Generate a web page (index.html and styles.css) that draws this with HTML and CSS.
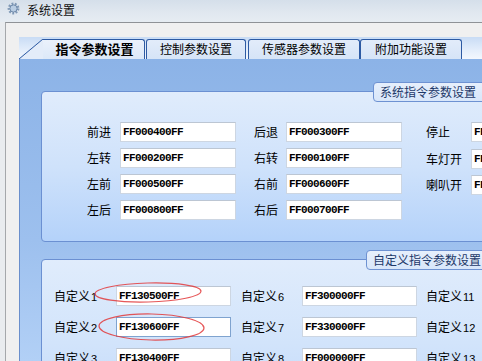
FILE: index.html
```html
<!DOCTYPE html>
<html>
<head>
  <meta charset="utf-8">
  <title>系统设置</title>
  <link rel="stylesheet" href="styles.css">
</head>
<body>
  <div id=window>
    <div class=titlebar>
      <svg class=app-icon width=16 height=16 viewBox="0 0 16 16">
        <circle cx=6.5 cy=6.5 r=4.6 fill=none stroke="#7f98b6" stroke-width=2.6 stroke-dasharray="1.8 1.4"/>
        <circle cx=6.5 cy=6.5 r=3.6 fill="#b9cde3" stroke="#6f8aab" stroke-width=1/>
        <circle cx=6.5 cy=6.5 r=1.5 fill="#eef4fa"/>
        <circle cx=12.5 cy=12.5 r=2.3 fill="#a9b6c4" stroke="#7b8896" stroke-width=1 stroke-dasharray="1.2 0.8"/>
      </svg>
      <span class=title>系统设置</span>
    </div>
    <div class=client>
      <div class=tabs>
        <div class="tab active">指令参数设置</div>
        <div class="tab t2">控制参数设置</div>
        <div class="tab t3">传感器参数设置</div>
        <div class="tab t4">附加功能设置</div>
      </div>
      <div class=panel>
        <div class="group g1">
          <div class=legend>系统指令参数设置</div>
          <div class=cols>
            <div class="col c1">
              <div class=row><span class=lbl>前进</span><span class=field>FF000400FF</span></div>
              <div class=row><span class=lbl>左转</span><span class=field>FF000200FF</span></div>
              <div class=row><span class=lbl>左前</span><span class=field>FF000500FF</span></div>
              <div class=row><span class=lbl>左后</span><span class=field>FF000800FF</span></div>
            </div>
            <div class="col c2">
              <div class=row><span class=lbl>后退</span><span class=field>FF000300FF</span></div>
              <div class=row><span class=lbl>右转</span><span class=field>FF000100FF</span></div>
              <div class=row><span class=lbl>右前</span><span class=field>FF000600FF</span></div>
              <div class=row><span class=lbl>右后</span><span class=field>FF000700FF</span></div>
            </div>
            <div class="col c3">
              <div class=row><span class=lbl>停止</span><span class=field>FF000000FF</span></div>
              <div class=row><span class=lbl>车灯开</span><span class=field>FF000900FF</span></div>
              <div class=row><span class=lbl>喇叭开</span><span class=field>FF000A00FF</span></div>
            </div>
          </div>
        </div>
        <div class="group g2">
          <div class=legend>自定义指令参数设置</div>
          <div class=cols>
            <div class="col c1">
              <div class=row><span class=lbl>自定义<i>1</i></span><span class=field>FF130500FF</span></div>
              <div class=row><span class=lbl>自定义<i>2</i></span><span class="field focus">FF130600FF</span></div>
              <div class=row><span class=lbl>自定义<i>3</i></span><span class=field>FF130400FF</span></div>
            </div>
            <div class="col c2">
              <div class=row><span class=lbl>自定义<i>6</i></span><span class=field>FF300000FF</span></div>
              <div class=row><span class=lbl>自定义<i>7</i></span><span class=field>FF330000FF</span></div>
              <div class=row><span class=lbl>自定义<i>8</i></span><span class=field>FF000000FF</span></div>
            </div>
            <div class="col c3">
              <div class=row><span class=lbl>自定义<i>11</i></span><span class=field>FF000000FF</span></div>
              <div class=row><span class=lbl>自定义<i>12</i></span><span class=field>FF000000FF</span></div>
              <div class=row><span class=lbl>自定义<i>13</i></span><span class=field>FF000000FF</span></div>
            </div>
          </div>
        </div>
      </div>
    </div>
    <!-- hand-drawn marks over the screenshot -->
    <svg class=marks width=482 height=361>
      <ellipse cx=148 cy=292.5 rx=53 ry=9.5 transform="rotate(-1.5 148 292.5)"/>
      <ellipse cx=151.5 cy=327 rx=52.5 ry=13 transform="rotate(1 151.5 327)"/>
    </svg>
  </div>
</body>
</html>
```

FILE: styles.css
```css
html, body {
  margin: 0;
  height: 100%;
  overflow: hidden;
}
body {
  font: 12px "Noto Sans CJK SC", "Noto Sans", sans-serif;
  color: #000;
  background: #f0f0f0;
}
#window {
  position: relative;
  width: 482px;
  height: 361px;
  display: flex;
  flex-direction: column;
  background: #e9ecef;
}
.titlebar {
  height: 22px;
  flex: none;
  display: flex;
  align-items: center;
  background: linear-gradient(#d5dfea, #e1e8f0 60%, #e6ecf2);
}
.app-icon {
  margin: -2px 4px 0 7px;
}
.title {
  line-height: 14px;
  margin-top: -2px;
  color: #111;
}
.client {
  flex: 1;
  display: flex;
  flex-direction: column;
  margin-left: 5px;
  border-top: 1px solid #8f9296;
  border-left: 1px solid #a5a8ab;
  background: #f0f0f0;
  padding: 14px 0 0 13px;
  min-height: 0;
}

/* tab strip */
.tabs {
  height: 22px;
  flex: none;
  display: flex;
  align-items: flex-end;
  background: linear-gradient(#c9dcf5, #e4eefb 60%, #f3f7fd);
  white-space: nowrap;
}
.tab {
  box-sizing: border-box;
  height: 20px;
  border: 1px solid #2d5aa3;
  border-bottom: none;
  border-radius: 3px 3px 0 0;
  background: linear-gradient(#e2ecfa, #d6e4f7);
  text-align: center;
  line-height: 18px;
  font-size: 12px;
}
.tab.active {
  position: relative;
  margin-left: 24px;
  width: 102px;
  border-left: none;
  border-radius: 0 3px 0 0;
  font-weight: bold;
  font-size: 13px;
  padding-left: 2px;
  background: linear-gradient(#eaf1fb, #dce8f8);
}
.tab.active::before {
  content: "";
  position: absolute;
  left: -24px;
  top: -1px;
  width: 24px;
  height: 20px;
  background: linear-gradient(to bottom right, transparent calc(50% - 0.8px), #2d5aa3 50%, #e3ecf9 calc(50% + 0.8px));
}
.t2 {
  width: 100px;
  margin-left: 1px;
}
.t3 {
  width: 112px;
  margin-left: 2px;
}
.t4 {
  width: 102px;
  margin-left: 0;
}

/* blue page */
.panel {
  flex: 1;
  border-left: 1px solid #6a8fcc;
  background: linear-gradient(#8cb3e7, #9dc0ee 60%, #b2d0f6);
  padding: 32px 0 0 21px;
  overflow: hidden;
}
.group {
  position: relative;
  box-sizing: border-box;
  width: 620px;
  border: 1px solid #6b90d2;
  border-radius: 4px;
}
.g1 {
  height: 151px;
  padding: 30px 0 0 45px;
  margin-bottom: 17px;
  background: linear-gradient(#e0ecfc, #cfe2fb 50%, #b4d2fa);
}
.g2 {
  height: 140px;
  padding: 26px 0 0 12px;
  background: linear-gradient(#e0ecfc, #d2e4fb 60%, #c4dafa);
}
.legend {
  position: absolute;
  top: -10px;
  height: 20px;
  box-sizing: border-box;
  width: 200px;
  padding-left: 6px;
  border: 1px solid #6e92d2;
  border-radius: 4px;
  background: linear-gradient(#e6effc, #d8e6fa);
  color: #1d3868;
  font-size: 12px;
  line-height: 18px;
  white-space: nowrap;
}
.g1 .legend {
  left: 331px;
}
.g2 .legend {
  left: 324px;
}

.cols {
  display: flex;
  align-items: flex-start;
}
.col {
  display: flex;
  flex-direction: column;
  flex: none;
}
.row {
  display: flex;
  align-items: center;
  height: 20px;
  white-space: nowrap;
}
.lbl {
  flex: none;
  line-height: 14px;
}
.lbl i {
  font-style: normal;
  font-family: "Liberation Sans", sans-serif;
  font-size: 11px;
  margin-left: 1px;
}
.field {
  flex: none;
  box-sizing: border-box;
  width: 116px;
  height: 20px;
  border: 1px solid #cdd6e2;
  border-top-color: #bcc6d3;
  background: #fff;
  padding-left: 2px;
  font: bold 11px "Liberation Mono", monospace;
  letter-spacing: -0.6px;
  line-height: 18px;
}
.field.focus {
  border-color: #7fa3cf;
}

.g1 .col {
  gap: 6px;
}
.g1 .c1 {
  margin-right: 18px;
}
.g1 .c1 .lbl {
  width: 33px;
}
.g1 .c2 {
  margin-right: 24px;
}
.g1 .c2 .lbl {
  width: 32px;
}
.g1 .c3 {
  gap: 6.5px;
}
.g1 .c3 .lbl {
  width: 45px;
}

.g2 .col {
  gap: 11px;
}
.g2 .field {
  width: 115px;
}
.g2 .c1 {
  margin-right: 10px;
}
.g2 .c1 .lbl {
  width: 62px;
}
.g2 .c2 {
  margin-right: 9px;
}
.g2 .c2 .lbl {
  width: 61px;
}
.g2 .c3 .lbl {
  width: 62px;
}

.marks {
  position: absolute;
  left: 0;
  top: 0;
  pointer-events: none;
}
.marks ellipse {
  fill: none;
  stroke: #e2393b;
  stroke-width: 1.2;
  opacity: 0.85;
}
```
